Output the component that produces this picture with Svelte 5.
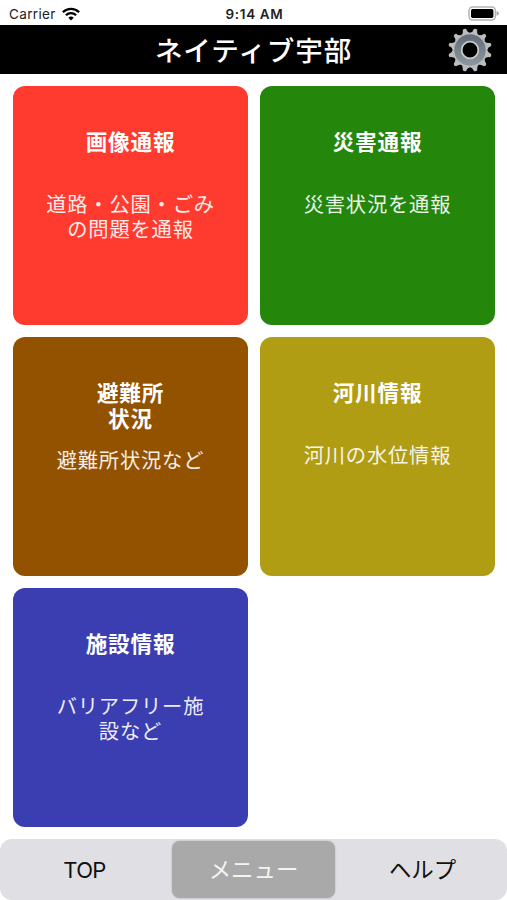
<script>
  const cards = [
    { id: 'image', title: ['画像通報'], text: ['道路・公園・ごみ', 'の問題を通報'] },
    { id: 'disaster', title: ['災害通報'], text: ['災害状況を通報'] },
    { id: 'shelter', title: ['避難所', '状況'], text: ['避難所状況など'] },
    { id: 'river', title: ['河川情報'], text: ['河川の水位情報'] },
    { id: 'facility', title: ['施設情報'], text: ['バリアフリー施', '設など'] }
  ];

  const tabs = ['TOP', 'メニュー', 'ヘルプ'];
  let active = $state(1);

  const teeth = Array.from({ length: 12 }, (_, i) => 15 + i * 30);
</script>

<div class="app">
  <div class="status">
    <div class="carrier">
      <span>Carrier</span>
      <svg width="18" height="14" viewBox="0 0 18 14" fill="none" stroke="#000" stroke-width="2.3">
        <path d="M0.9 5.2 A11.5 11.5 0 0 1 17.1 5.2"/>
        <path d="M3.9 8.3 A7.3 7.3 0 0 1 14.1 8.3"/>
        <path d="M6.3 10.7 A3.9 3.9 0 0 1 11.7 10.7 L9 13.5 Z" fill="#000" stroke="none"/>
      </svg>
    </div>
    <span class="time">9:14 AM</span>
    <svg class="battery" width="32" height="15" viewBox="0 0 32 15">
      <rect x="1" y="0.9" width="26.4" height="13" rx="3.6" fill="#fff" stroke="#b4b4b4" stroke-width="1.5"/>
      <rect x="3" y="2.9" width="22.4" height="9" rx="1.6" fill="#000"/>
      <path d="M28.6 5 Q31 6 31 7.4 Q31 8.8 28.6 9.8 Z" fill="#a5a5a5"/>
    </svg>
  </div>

  <header>
    <h1>ネイティブ宇部</h1>
    <button class="settings" aria-label="設定">
      <svg width="46" height="46" viewBox="-23 -23 46 46">
        <defs>
          <linearGradient id="ring" x1="0" y1="0" x2="0" y2="1">
            <stop offset="0" stop-color="#66707c"/>
            <stop offset="1" stop-color="#89939b"/>
          </linearGradient>
        </defs>
        {#each teeth as angle}
          <path d="M-4.4 -16.6 Q-1.9 -18 -1.7 -21.4 Q0 -22.6 1.7 -21.4 Q1.9 -18 4.4 -16.6 Z" fill="#bcbdbd" transform="rotate({angle})"/>
        {/each}
        <circle r="17.3" fill="#bcbdbd"/>
        <circle r="12.3" fill="none" stroke="url(#ring)" stroke-width="6.8"/>
        <circle r="8.3" fill="#000" stroke="#c9caca" stroke-width="1.7"/>
      </svg>
    </button>
  </header>

  <main>
    {#each cards as card (card.id)}
      <button class="card {card.id}">
        <span class="title" class:tall={card.title.length > 1}>
          {#each card.title as line}<span>{line}</span>{/each}
        </span>
        <span class="text">
          {#each card.text as line}<span>{line}</span>{/each}
        </span>
      </button>
    {/each}
  </main>

  <nav>
    {#each tabs as tab, i}
      <button class:active={active === i} class:latin={tab === 'TOP'} onclick={() => (active = i)}>{tab}</button>
    {/each}
  </nav>
</div>

<style>
  :global(body) {
    margin: 0;
    background: #fff;
  }

  .app {
    width: 507px;
    height: 900px;
    display: flex;
    flex-direction: column;
    font-family: Inter, "Noto Sans CJK JP", sans-serif;
    overflow: hidden;
  }

  button {
    border: 0;
    margin: 0;
    padding: 0;
    font: inherit;
    cursor: pointer;
  }

  .status {
    height: 25px;
    flex: none;
    display: grid;
    grid-template-columns: 1fr auto 1fr;
    align-items: center;
    box-sizing: border-box;
    padding: 2px 7px 0 9px;
    font-size: 13.5px;
    color: #222;
  }

  .carrier {
    display: flex;
    align-items: center;
    gap: 6px;
    letter-spacing: 0.35px;
  }

  .time {
    font-weight: 600;
    letter-spacing: 0.65px;
  }

  .battery {
    justify-self: end;
  }

  header {
    height: 49px;
    flex: none;
    background: #000;
    color: #fff;
    display: grid;
    grid-template-columns: 60px 1fr 60px;
    align-items: center;
  }

  h1 {
    grid-column: 2;
    margin: 0;
    padding-top: 2px;
    text-align: center;
    font-size: 27.6px;
    font-weight: 500;
    letter-spacing: 0.9px;
    line-height: 40px;
  }

  .settings {
    width: 46px;
    height: 46px;
    background: none;
  }

  .settings svg {
    display: block;
  }

  main {
    flex: 1;
    display: grid;
    grid-template-columns: 235px 235px;
    grid-auto-rows: 239px;
    gap: 12px;
    padding: 12px 13px;
  }

  .card {
    border-radius: 12px;
    color: #fff;
    display: flex;
    flex-direction: column;
    align-items: center;
    justify-content: flex-start;
    padding-top: 43px;
  }

  .card span span {
    display: block;
  }

  .title {
    font-size: 21.6px;
    font-weight: 700;
    letter-spacing: 0.8px;
    line-height: 26px;
    height: 64px;
  }

  .title.tall {
    height: 69px;
  }

  .text {
    font-size: 20.3px;
    letter-spacing: 0.8px;
    line-height: 24.5px;
    opacity: 0.9;
  }

  .image {
    background: #ff3b30;
  }

  .disaster {
    background: #24870c;
  }

  .shelter {
    background: #935200;
  }

  .river {
    background: #b09d13;
  }

  .facility {
    background: #3a3eb1;
  }

  nav {
    height: 61px;
    flex: none;
    box-sizing: border-box;
    display: grid;
    grid-template-columns: repeat(3, 163px);
    justify-content: space-between;
    padding: 2px 3px;
    border-radius: 12px;
    background: #e0dfe4;
  }

  nav button {
    border-radius: 8px;
    background: none;
    color: #111;
    font-size: 22.4px;
    padding-bottom: 4px;
  }

  nav button.latin {
    font-size: 22px;
    letter-spacing: -0.6px;
    padding-bottom: 0;
  }

  nav button.active {
    background: #a9a9a9;
    color: #f4f4f4;
    box-shadow: 0 0 2px rgba(0, 0, 0, 0.25);
  }
</style>
